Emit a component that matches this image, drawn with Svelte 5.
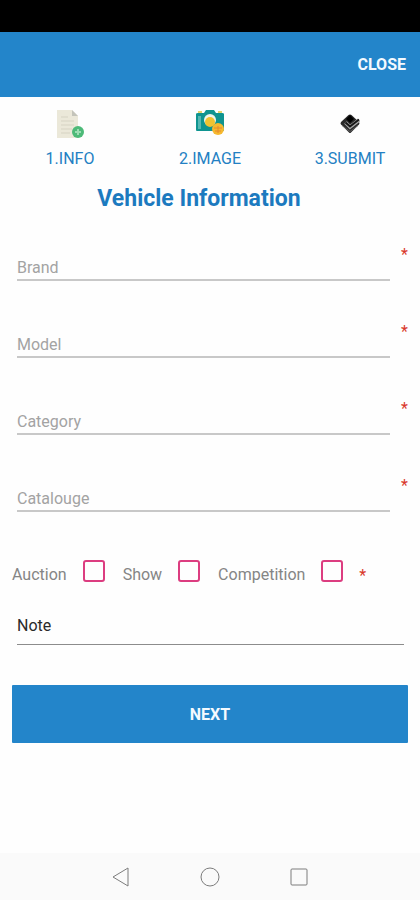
<script>
  const fields = ['Brand', 'Model', 'Category', 'Catalouge'];
  const kinds = ['Auction', 'Show', 'Competition'];

  let values = $state({ Brand: '', Model: '', Category: '', Catalouge: '' });
  let checked = $state({ Auction: false, Show: false, Competition: false });
  let note = $state('');
</script>

<div class="screen">
  <div class="status"></div>
  <header>
    <button type="button" class="close">CLOSE</button>
  </header>

  <nav class="steps">
    <a href="#info">
      <svg width="30" height="30" viewBox="0 0 30 30" aria-hidden="true">
        <path d="M2 1h15l6 6v22H2z" fill="#ebe8d9" />
        <path d="M17 1l6 6h-6z" fill="#c4c4ba" />
        <path d="M6 8h7M6 12h13M6 16h13M6 20h11M6 24h9" stroke="#d6d3c3" stroke-width="1" />
        <circle cx="23" cy="23" r="6" fill="#4dba78" />
        <path d="M23 20v6M20 23h6" stroke="#9bdcb2" stroke-width="2" />
      </svg>
      <span>1.INFO</span>
    </a>
    <a href="#image">
      <svg width="30" height="30" viewBox="0 0 30 30" aria-hidden="true">
        <path d="M3 2h4v3H3zM23 2h4v3h-4z" fill="#e4d36b" />
        <path d="M1 5q0-1 2-1h6l2-3h8l2 3h6q2 0 2 1v16q0 1-1 1H2q-1 0-1-1z" fill="#0f9490" />
        <path d="M3 7h3v13H3z" fill="#55b8b2" />
        <circle cx="15" cy="11" r="6" fill="#f2f4e8" />
        <circle cx="15" cy="13" r="5" fill="#f0c331" />
        <circle cx="23" cy="20" r="6" fill="#f6b92f" />
        <path d="M19 19h8M20 22h6M23 17v7" stroke="#e68a2e" stroke-width="1" />
      </svg>
      <span>2.IMAGE</span>
    </a>
    <a href="#submit">
      <svg width="30" height="30" viewBox="0 0 30 30" aria-hidden="true">
        <path d="M15 5.5q1 0 1.500 .5l7.500 7q1 1 0 2.500l-8 8q-1 1-2 0l-8-8q-1-1 0-2.500l7.500-7q.5-.5 1.500-.5z" fill="#2a2a2a" />
        <path d="M15 6l4 4-4 4-4-4z" fill="#000" />
        <path d="M10.500 13.500l4.500 4.500 9-7" fill="none" stroke="#a9a9a9" stroke-width="3.600" />
        <path d="M10.500 13.500l4.500 4 9-7" fill="none" stroke="#161616" stroke-width="2" />
        <path d="M7 16.500l8 6 8-6" fill="none" stroke="#6e6e6e" stroke-width=".8" />
      </svg>
      <span>3.SUBMIT</span>
    </a>
  </nav>

  <form onsubmit={(e) => e.preventDefault()}>
    <h1>Vehicle Information</h1>

    {#each fields as name}
      <div class="field">
        <input type="text" placeholder={name} aria-label={name} bind:value={values[name]} />
        <span class="star">*</span>
      </div>
    {/each}

    <div class="kinds">
      {#each kinds as kind}
        <label>
          <span>{kind}</span>
          <input type="checkbox" bind:checked={checked[kind]} />
        </label>
      {/each}
      <span class="star">*</span>
    </div>

    <input class="note" type="text" placeholder="Note" aria-label="Note" bind:value={note} />

    <button type="submit" class="next">NEXT</button>
  </form>

  <footer>
    <button type="button" aria-label="Back">
      <svg width="22" height="22" viewBox="0 0 22 22">
        <path d="M3 11L18 2v18z" />
      </svg>
    </button>
    <button type="button" aria-label="Home">
      <svg width="22" height="22" viewBox="0 0 22 22">
        <circle cx="11" cy="11" r="9" />
      </svg>
    </button>
    <button type="button" aria-label="Recent">
      <svg width="22" height="22" viewBox="0 0 22 22">
        <rect x="3" y="3" width="16" height="16" rx="1" />
      </svg>
    </button>
  </footer>
</div>

<style>
  :global(body) {
    margin: 0;
    background: #fefefe;
  }

  .screen {
    display: flex;
    flex-direction: column;
    min-height: 100vh;
    font-family: Roboto, 'Liberation Sans', sans-serif;
    font-size: 16px;
  }

  button,
  input {
    font: inherit;
    border: 0;
    margin: 0;
    padding: 0;
    background: none;
  }

  input {
    min-width: 0;
    border-radius: 0;
    outline: none;
  }

  .status {
    height: 32px;
    background: #000;
  }

  header {
    display: flex;
    justify-content: flex-end;
    align-items: center;
    height: 65px;
    padding: 0 14px;
    background: #2385ca;
  }

  .close,
  .next {
    color: #f4faff;
    font-weight: 700;
  }

  .steps {
    display: grid;
    grid-template-columns: repeat(3, 1fr);
    padding-top: 12px;
  }

  .steps a {
    display: flex;
    flex-direction: column;
    align-items: center;
    gap: 8px;
    color: #2380c3;
    line-height: 24px;
    text-decoration: none;
  }

  .steps svg {
    display: block;
  }

  form {
    display: flex;
    flex-direction: column;
    padding: 0 12px;
  }

  h1 {
    margin: 12px 22px 0 0;
    color: #1c7abf;
    font-size: 23px;
    font-weight: 700;
    line-height: 32px;
    text-align: center;
  }

  .field {
    display: flex;
    align-items: flex-end;
    height: 77px;
    padding-left: 5px;
  }

  h1 + .field {
    height: 66px;
  }

  .field input {
    flex: 1;
    height: 24px;
    border-bottom: 2px solid #c8c8c8;
    padding-bottom: 2px;
    box-sizing: border-box;
  }

  .field input::placeholder {
    color: #a3a3a3;
    opacity: 1;
  }

  .star {
    color: #d9382b;
    line-height: 20px;
  }

  .field .star {
    width: 18px;
    margin-bottom: 16px;
    text-align: right;
  }

  .kinds {
    display: flex;
    align-items: flex-end;
    gap: 18px;
    margin-top: 48px;
    color: #858585;
  }

  .kinds label {
    display: flex;
    gap: 16px;
    line-height: 30px;
  }

  .kinds .star {
    margin: 0 0 4px -2px;
  }

  .kinds input {
    appearance: none;
    width: 22px;
    height: 22px;
    border: 2px solid #dc3d80;
    border-radius: 3px;
  }

  .kinds input:checked {
    background: #dc3d80;
  }

  .note {
    height: 36px;
    margin: 17px 4px 0 5px;
    border-bottom: 1px solid #8c8c8c;
    padding-bottom: 1px;
  }

  .note::placeholder {
    color: #2a2a2a;
    opacity: 1;
  }

  .next {
    height: 58px;
    margin-top: 40px;
    border-radius: 1px;
    background: #2385ca;
  }

  footer {
    display: flex;
    justify-content: center;
    align-items: center;
    gap: 67px;
    height: 47px;
    margin-top: auto;
    background: #fafafa;
  }

  footer button {
    display: flex;
  }

  footer svg {
    fill: none;
    stroke: #7c7c7c;
    stroke-width: 1px;
    stroke-linejoin: round;
  }
</style>
